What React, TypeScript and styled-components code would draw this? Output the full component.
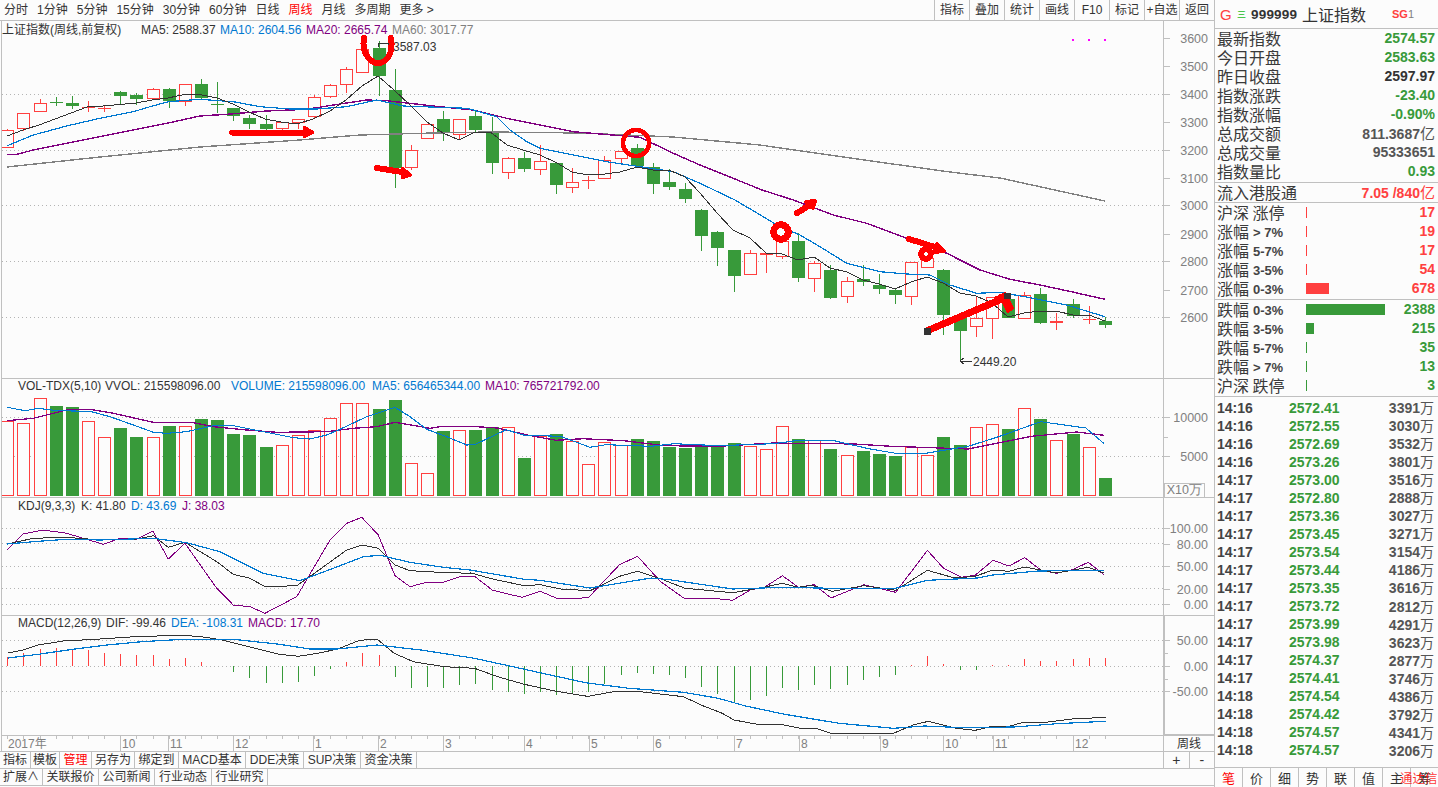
import React from "react";
import styled, { createGlobalStyle } from "styled-components";

const RED = "#ff4040";
const GREEN = "#389a3a";
const BLUE = "#0078d0";
const PURPLE = "#800080";
const DARK = "#333333";
const GRAY = "#808080";
const LINE = "#c0c0c0";
const SANS = `"Liberation Sans", Arial, sans-serif`;
const CJK = `"Liberation Sans", "Noto Sans CJK SC", sans-serif`;

const Global = createGlobalStyle`
  html, body { margin: 0; padding: 0; background: #fcfcfc; overflow: hidden; }
  #root { width: 1438px; height: 787px; }
  * { box-sizing: border-box; }
`;

const Page = styled.div`
  position: relative;
  display: flex;
  width: 1438px;
  height: 787px;
  background: #fcfcfc;
  color: ${DARK};
  font: 12px/1 ${CJK};
  overflow: hidden;
  white-space: nowrap;
`;
const LeftCol = styled.div`
  display: flex;
  flex-direction: column;
  width: 1214px;
  flex: none;
`;
const RightCol = styled.div`
  display: flex;
  flex-direction: column;
  width: 224px;
  flex: none;
  border-left: 1px solid ${LINE};
`;
const TopBar = styled.div`
  display: flex;
  justify-content: space-between;
  height: 21px;
  flex: none;
  border-bottom: 1px solid ${LINE};
`;
const Periods = styled.div`
  display: flex;
  align-items: center;
  gap: 9px;
  padding-left: 4px;
`;
const Period = styled.span<{ $on?: boolean }>`
  color: ${(p) => (p.$on ? "#ff0000" : DARK)};
`;
const Tools = styled.div`
  display: flex;
`;
const ToolBtn = styled.div`
  width: 35px;
  display: flex;
  align-items: center;
  justify-content: center;
  border-left: 1px solid ${LINE};
`;
const Panel = styled.div<{ $h: number }>`
  display: flex;
  height: ${(p) => p.$h}px;
  flex: none;
  margin-left: 1px;
  border-left: 1px solid ${LINE};
  border-bottom: 1px solid ${LINE};
`;
const Plot = styled.svg`
  display: block;
  width: 1161px;
  height: 100%;
  flex: none;
`;
const DatePlot = styled.svg`
  display: block;
  width: 1163px;
  height: 100%;
  flex: none;
`;
const Axis = styled.svg<{ $heavy?: boolean }>`
  display: block;
  width: 51px;
  height: 100%;
  flex: none;
  border-left: 1px solid ${LINE};
  ${(p) => (p.$heavy ? `box-shadow: inset 1px 0 0 ${LINE}, inset 0 -1px 0 ${LINE};` : "")}
`;
const Legend = styled.text<{ $c?: string }>`
  font: 12px ${CJK};
  fill: ${(p) => p.$c || DARK};
`;
const AxisText = styled.text`
  font: 12.5px ${SANS};
  fill: ${GRAY};
  text-anchor: end;
`;
const Row = styled.div<{ $h: number }>`
  display: flex;
  height: ${(p) => p.$h}px;
  flex: none;
  border-bottom: 1px solid ${LINE};
`;
const DateCell = styled.div`
  width: 51px;
  flex: none;
  display: flex;
  align-items: center;
  justify-content: center;
  border-left: 1px solid ${LINE};
`;
const PlusMinus = styled.div`
  width: 51px;
  flex: none;
  display: flex;
  border-left: 1px solid ${LINE};
`;
const PlusMinusBtn = styled.div`
  flex: 1;
  display: flex;
  align-items: center;
  justify-content: center;
  font-size: 14px;
  & + & { border-left: 1px solid ${LINE}; }
`;
const Tabs = styled.div`
  flex: 1;
  display: flex;
`;
const Tab = styled.div<{ $w: number; $on?: boolean }>`
  width: ${(p) => p.$w}px;
  flex: none;
  display: flex;
  align-items: center;
  justify-content: center;
  border-right: 1px solid ${LINE};
  color: ${(p) => (p.$on ? "#ff0000" : DARK)};
`;
const Header = styled.div`
  height: 29px;
  flex: none;
  display: flex;
  align-items: center;
  border-bottom: 1px solid ${LINE};
  padding-left: 5px;
`;
const HeadG = styled.span`
  width: 17px;
  font: 15px ${SANS};
  color: ${RED};
`;
const HeadSan = styled.span`
  width: 14px;
  font: 9px "Noto Sans CJK SC", sans-serif;
  color: #22bb22;
`;
const HeadCode = styled.span`
  font: bold 13.5px ${SANS};
  width: 51px;
  letter-spacing: 0.2px;
`;
const HeadName = styled.span`
  font: 16px "Noto Sans CJK SC", sans-serif;
  width: 90px;
`;
const HeadSg = styled.span`
  font: bold 11px ${SANS};
  color: ${RED};
`;
const HeadOne = styled.span`
  font: 11px ${SANS};
  color: ${GRAY};
`;
const Block = styled.div<{ $h: number }>`
  height: ${(p) => p.$h}px;
  flex: none;
  border-bottom: 1px solid ${LINE};
`;
const Info = styled.div`
  height: 19px;
  display: flex;
  align-items: center;
  justify-content: space-between;
  padding: 0 3px 0 2px;
`;
const Label = styled.span`
  font: 16px/19px "Noto Sans CJK SC", sans-serif;
  color: #3a3a3a;
`;
const Value = styled.span<{ $c?: string }>`
  font: bold 14px/19px ${SANS};
  color: ${(p) => p.$c || "#555"};
`;
const Unit = styled.span`
  font: 15px/19px "Noto Sans CJK SC", sans-serif;
`;
const Dist = styled.div`
  height: 19px;
  display: grid;
  grid-template-columns: 89px 1fr auto;
  align-items: center;
  padding: 0 3px 0 2px;
`;
const Suffix = styled.span`
  font: bold 13px ${SANS};
  color: #444;
  margin-left: 4px;
  vertical-align: 1px;
`;
const Bar = styled.div<{ $w: number; $c: string }>`
  width: ${(p) => p.$w}px;
  height: 11px;
  background: ${(p) => p.$c};
`;
const TickList = styled.div`
  height: 371px;
  flex: none;
  padding-top: 1px;
  border-bottom: 1px solid ${LINE};
`;
const Tick = styled.div`
  height: 18.05px;
  display: grid;
  grid-template-columns: 72px 1fr auto;
  align-items: center;
  padding: 0 4px 0 2px;
  font: bold 14px/18px ${SANS};
`;
const TickTime = styled.span`
  color: #444;
`;
const TickPrice = styled.span`
  color: ${GREEN};
`;
const TickVol = styled.span`
  color: #555;
`;
const TickUnit = styled.span`
  font: 14px/18px "Noto Sans CJK SC", sans-serif;
`;
const SideTabs = styled.div`
  flex: 1;
  display: flex;
`;
const SideTab = styled.div<{ $on?: boolean }>`
  flex: 1;
  display: flex;
  align-items: center;
  justify-content: center;
  font: 13px "Noto Sans CJK SC", sans-serif;
  color: ${(p) => (p.$on ? "#ff0000" : DARK)};
  & + & { border-left: 1px solid ${LINE}; }
`;
const Stamp = styled.div`
  position: absolute;
  left: 1400px;
  top: 771px;
  font: 12.5px "Noto Sans CJK SC", sans-serif;
  color: rgba(255, 0, 0, 0.82);
  line-height: 14px;
`;

type P = number[];
const z = (sx: number, ox: number, oy: number, raw: P[]): P[] =>
  raw.map(([x, y]) => [ox + x / sx, oy + y / 3]);
const pts = (a: P[]) => a.map((p) => `${p[0].toFixed(1)},${p[1].toFixed(1)}`).join(" ");
const X = (i: number) => Math.round(7.3 + 16.14 * i);

// high, body top, body bottom, low, 1 = up (red)
const candles: number[][] = [
  [129,130,148,148,1],[113,113,129,131,1],[99,103,112,112,1],[97,102,103,106,0],[96,103,106,109,0],
  [101,107,108,112,1],[105,108,109,112,1],[91,92,96,104,0],[93,95,99,105,0],[88,89,99,99,1],
  [88,89,101,108,0],[84,84,102,106,1],[79,84,98,100,0],[82,104,105,113,0],[108,108,116,121,0],
  [115,118,124,129,0],[115,124,129,130,0],[122,122,129,130,1],[119,119,123,129,1],[95,97,117,118,1],
  [84,85,97,98,1],[67,69,85,93,1],[48,49,73,73,1],[41,48,76,96,0],[69,90,168,188,0],
  [145,150,168,170,1],[124,124,139,139,1],[111,119,133,141,0],[119,119,135,139,1],[110,116,130,133,0],
  [117,132,163,174,0],[157,158,173,179,1],[152,158,169,172,0],[145,161,170,175,1],[163,163,185,194,0],
  [168,182,188,193,1],[176,180,181,189,1],[156,160,179,179,1],[151,151,159,164,1],[144,148,166,166,0],
  [163,167,184,194,0],[169,182,187,190,0],[183,189,199,203,0],[209,210,236,251,0],[231,232,248,266,0],
  [250,250,276,292,0],[250,253,275,275,1],[253,253,255,273,1],[241,241,257,259,1],[233,241,278,282,0],
  [261,263,279,292,1],[265,270,298,299,0],[277,281,297,303,1],[265,279,282,286,0],[274,285,289,294,0],
  [289,290,295,304,0],[262,262,297,305,1],[255,258,268,268,1],[269,270,315,335,0],[316,316,331,361,0],
  [297,318,327,337,1],[297,297,319,339,1],[296,299,318,318,0],[292,295,319,319,1],[288,294,323,324,0],
  [313,321,323,330,1],[299,304,316,318,0],[306,319,320,324,1],[317,321,325,328,0],
];

const vols: P[] = [
  [421,1],[423,1],[398,1],[406,0],[407,0],[421,1],[437,1],[428,0],[437,0],[437,1],[426,0],[426,1],[419,0],[420,0],
  [434,0],[435,0],[447,0],[445,1],[435,1],[430,1],[418,1],[403,1],[403,1],[409,0],[400,0],[463,1],[473,1],[431,0],
  [430,1],[430,0],[427,0],[427,1],[458,0],[436,1],[434,0],[441,1],[464,1],[442,1],[445,1],[439,0],[441,0],[447,0],
  [448,0],[445,0],[445,0],[443,0],[446,1],[449,1],[426,1],[439,0],[440,1],[449,0],[455,1],[451,0],[454,0],[456,0],
  [447,1],[455,1],[437,0],[445,0],[427,1],[424,1],[429,0],[408,1],[419,0],[440,1],[434,0],[447,1],[478,0],
];

const macd: number[] = [
  657,653,649,648,649,650,653,654,655,655,659,658,662,666,672,678,683,683,682,676,669,662,653,655,677,688,687,688,685,684,
  690,692,694,692,695,694,692,684,675,673,674,675,678,687,694,702,700,696,688,690,685,689,685,680,677,675,665,656,664,670,
  670,665,665,659,661,661,659,658,658,
];

const ma5: P[] = [
  [7,136],[23,130],[39,125],[55,119],[71,113],[87,107],[103,106],[120,104.5],[136,103],[152,100],[168,98],[184,94.5],[200,94.5],
  [217,98],[233,104],[249,112],[265,119],[281,122],[297,124],[313,119],[330,111],[346,100],[362,86],[378,76],[394,90],[410,105],
  [427,122],[443,133],[459,140],[475,132],[491,132.6],[507,145],[523,150],[540,155],[557,163],[572,172],[588,175],[605,174],[620,172],
  [637,167],[653,170],[669,170],[685,177],[700,193],[717,213],[733,230],[750,238],[766,253],[782,254],[798,260],[814,257],[830,268],
  [847,272],[863,280],[879,284],[895,289],[911,282],[927,277],[943,283],[960,293],[976,296],[992,303],[1008,317],[1024,313],[1040,311],
  [1056,311],[1073,315],[1089,315],[1105,321],
];
const ma10: P[] = [
  ...z(3,0,0,[[22,437],[100,405],[200,378],[300,355],[400,335],[450,320],[505,305],[600,298],[700,305],[780,320],[870,327],[950,327],[1040,320],[1130,300],[1210,318],[1400,325]]),
  ...z(3,340,20,[[400,270],[470,290],[510,330],[560,365],[600,385],[700,405],[800,425],[900,440],[1000,455],[1080,490]]),
  ...z(3,700,200,[[105,0],[240,80],[300,105],[360,140],[440,190],[540,215],[620,222],[690,225],[750,255],[830,280],[900,277],[1000,295],[1100,315],[1215,350]]),
];
const ma20: P[] = [
  ...z(3,0,0,[[22,463],[50,463],[100,450],[200,430],[300,410],[400,390],[500,370],[600,348],[680,343],[800,333],[920,328],[1000,315],[1100,300],[1160,302],[1300,318]]),
  ...z(3,340,20,[[400,270],[500,295],[700,335],[900,352],[1000,400],[1080,435]]),
  [730,177],
  [762,190],
  ...z(3,700,200,[[280,0],[400,45],[500,70],[620,115],[740,160],[840,210],[930,238],[1020,255],[1100,272],[1215,298]]),
];
const ma60: P[] = [[7,167],[100,157],[200,147],[300,140],[360,135],[433,133],[490,132],[580,133],[673,137],[760,145],[850,158],[950,172],[1000,178],[1105,201]];

const volBlue: P[] = [
  ...z(3,0,370,[[22,112],[75,122],[115,115],[170,122],[270,124],[330,140],[400,165],[460,187],[500,190],[560,185],[640,167],[700,167],[790,185],[880,203],[930,207],[980,195],[1020,178],[1100,140],[1185,112],[1230,140],[1280,178],[1340,200],[1400,225]]),
  ...z(2.208,470,378,[[10,200],[80,155],[120,172],[200,175],[265,208],[300,200],[400,205],[450,197],[550,203],[670,197],[720,188],[800,187],[880,212],[940,226],[1000,227],[1100,205],[1170,175],[1260,131],[1360,150],[1400,197]]),
];
const volPurple: P[] = [
  ...z(3,0,370,[[22,152],[100,145],[200,120],[270,118],[340,130],[460,157],[580,158],[640,170],[740,180],[830,187],[980,185],[1060,175],[1130,170],[1185,157],[1290,175],[1320,170],[1400,170]]),
  ...z(2.208,470,378,[[0,145],[60,150],[130,172],[190,187],[250,182],[340,188],[430,203],[550,205],[670,195],[850,198],[930,205],[1100,213],[1240,175],[1340,162],[1400,172]]),
];
const kdjK: P[] = [
  ...z(3,0,370,[[22,522],[100,505],[200,502],[300,510],[360,508],[410,507],[460,497],[505,532],[555,517],[650,575],[700,613],[750,625],[795,650],[890,647],[950,605],[1040,540],[1085,525],[1135,535],[1185,585],[1230,602],[1320,607],[1410,610]]),
  ...z(2.208,470,498,[[0,224],[50,243],[120,263],[155,260],[200,273],[265,278],[330,235],[370,220],[420,242],[475,271],[580,284],[640,270],[690,256],[725,268],[755,262],[800,280],[870,263],[940,277],[1010,217],[1070,240],[1115,235],[1155,216],[1190,220],[1225,207],[1295,225],[1365,208],[1400,225]]),
];
const kdjD: P[] = [
  ...z(3,0,370,[[22,522],[100,515],[200,508],[300,510],[460,505],[560,518],[660,545],[790,610],[900,632],[1000,595],[1090,560],[1140,556],[1230,577],[1330,592],[1410,600]]),
  ...z(2.208,470,498,[[0,216],[120,244],[155,247],[265,270],[400,240],[440,245],[580,273],[690,268],[800,271],[940,271],[1010,247],[1120,240],[1155,231],[1255,219],[1400,217]]),
];
const kdjJ: P[] = [
  ...z(3,0,370,[[22,540],[70,492],[130,480],[200,490],[310,523],[360,505],[410,508],[458,483],[505,567],[555,520],[650,655],[700,705],[750,710],[795,730],[890,680],[990,510],[1040,460],[1085,442],[1135,495],[1185,617],[1230,650],[1280,637],[1330,637],[1380,620],[1410,620]]),
  ...z(2.208,470,498,[[0,235],[10,235],[50,277],[115,298],[155,280],[190,300],[225,303],[262,298],[330,200],[370,175],[420,250],[475,303],[545,302],[580,307],[620,275],[650,268],[690,233],[725,268],[760,260],[797,300],[870,260],[940,283],[1010,157],[1045,210],[1085,238],[1115,232],[1155,187],[1190,204],[1225,179],[1260,216],[1295,226],[1330,215],[1365,193],[1400,230]]),
];
const dif: P[] = [
  ...z(2.613,0,615,[[20,114],[60,105],[100,90],[165,78],[250,73],[340,66],[460,61],[520,64],[580,75],[650,95],[730,118],[780,124],[830,115],[880,103],[940,76],[985,72],[1030,115],[1080,140],[1160,155],[1240,160],[1300,185],[1370,208],[1450,228],[1530,243]]),
  ...z(2.57,590,615,[[0,243],[60,230],[130,230],[240,245],[290,272],[340,295],[370,315],[440,330],[490,328],[540,340],[580,340],[620,355],[780,355],[830,330],[870,319],[940,340],[990,346],[1030,335],[1080,333],[1110,323],[1170,322],[1240,312],[1325,307]]),
];
const dea: P[] = [
  ...z(2.613,0,615,[[20,129],[100,118],[190,103],[280,90],[370,80],[460,74],[620,74],[730,88],[810,102],[880,102],[985,90],[1100,105],[1240,130],[1340,155],[1450,183],[1530,203]]),
  ...z(2.57,590,615,[[0,205],[100,220],[240,232],[330,250],[400,273],[500,298],[640,325],[780,340],[860,333],[960,338],[1090,336],[1200,326],[1325,319]]),
];

const Grid = ({ ys }: { ys: number[] }) => (
  <g stroke="#b4b4b4" strokeDasharray="1 3">
    {ys.map((y) => (
      <line key={y} x1={2} x2={1163} y1={y + 0.5} y2={y + 0.5} />
    ))}
  </g>
);
const Ln = ({ p, c, w = 1 }: { p: P[]; c: string; w?: number }) => (
  <polyline points={pts(p)} fill="none" stroke={c} strokeWidth={w} />
);
const AxisMarks = ({ items, minor = [] }: { items: [string, number][]; minor?: number[] }) => (
  <>
    {items.map(([t, y]) => (
      <g key={t}>
        <line x1={1164} x2={1170} y1={y + 0.5} y2={y + 0.5} stroke={LINE} />
        <AxisText x={1208} y={y + 4.5}>{t}</AxisText>
      </g>
    ))}
    {minor.map((y) => (
      <line key={y} x1={1164} x2={1168} y1={y + 0.5} y2={y + 0.5} stroke={LINE} />
    ))}
  </>
);

const Candle = ({ d, i }: { d: number[]; i: number }) => {
  const [h, t, b, l, up] = d;
  const x = X(i);
  const c = up ? RED : GREEN;
  const thin = b - t < 4;
  return (
    <g>
      <rect x={x} y={h} width={1} height={Math.max(0, t - h)} fill={c} />
      <rect x={x} y={b} width={1} height={Math.max(0, l - b)} fill={c} />
      {up && !thin ? (
        <rect x={x - 5.5} y={t + 0.5} width={12} height={b - t - 1} fill="#fcfcfc" stroke={c} />
      ) : (
        <rect x={x - 6} y={t} width={13} height={b - t} fill={c} />
      )}
    </g>
  );
};

const Marks = () => (
  <g fill="none" stroke="#ff0000" strokeLinecap="round" strokeLinejoin="round">
    <path d="M364 38 C361 55 372 63 378 63 C385 63 394 55 391 38" strokeWidth={6} />
    <path d="M232 132.5 H306" strokeWidth={6} />
    <path d="M304 127 L313 132.5 L304 137 Z" strokeWidth={3} fill="#ff0000" />
    <path d="M377 168 L402 172" strokeWidth={6} />
    <path d="M402 168 L411 175 L402 178 Z" strokeWidth={3} fill="#ff0000" />
    <circle cx={636} cy={143} r={13} strokeWidth={4.6} />
    <circle cx={781} cy={232} r={7.2} strokeWidth={7} />
    <path d="M797 213 L810 205" strokeWidth={6} />
    <path d="M806 202 L815 201 L813 208 Z" strokeWidth={4} fill="#ff0000" />
    <path d="M909 239 L938 248" strokeWidth={6} />
    <path d="M937 244 L944 251 L934 252 Z" strokeWidth={4} fill="#ff0000" />
    <circle cx={926} cy={254} r={4.8} strokeWidth={6} />
    <path d="M929 330 L1002 299" strokeWidth={7} />
    <path d="M1000 296 L1005 294 L1012 308 L1008 311 Z" strokeWidth={3.5} fill="#ff0000" />
    <path d="M996 298 L1006 296" strokeWidth={4} />
  </g>
);

const MainPanel = () => (
  <Panel $h={358}>
    <Plot viewBox="2 21 1161 357" shapeRendering="crispEdges">
      <Grid ys={[94, 150, 205, 261, 317]} />
      {candles.map((d, i) => (
        <Candle key={i} d={d} i={i} />
      ))}
      <Ln p={ma60} c={GRAY} w={1.4} />
      <Ln p={ma20} c={PURPLE} w={1.4} />
      <Ln p={ma10} c={BLUE} w={1.2} />
      <Ln p={ma5} c={DARK} />
      <Legend x={2} y={34}>上证指数(周线,前复权)</Legend>
      <Legend x={141} y={34}>MA5: 2588.37</Legend>
      <Legend x={220} y={34} $c={BLUE}>MA10: 2604.56</Legend>
      <Legend x={306} y={34} $c={PURPLE}>MA20: 2665.74</Legend>
      <Legend x={392} y={34} $c={GRAY}>MA60: 3017.77</Legend>
      <path d="M378 47 V43 H385 L392 45" fill="none" stroke={DARK} />
      <Legend x={393} y={51}>3587.03</Legend>
      <path d="M960 361 H972 M960 361 L964 358 M960 361 L964 364" fill="none" stroke={DARK} />
      <Legend x={973} y={366}>2449.20</Legend>
      <rect x={1072} y={39} width={2} height={2} fill="#ff00ff" />
      <rect x={1088} y={39} width={2} height={2} fill="#ff00ff" />
      <rect x={1104} y={39} width={2} height={2} fill="#ff00ff" />
      <Marks />
      <rect x={924} y={328} width={7} height={7} fill={DARK} />
      <rect x={1004} y={293} width={7} height={6} fill={DARK} />
    </Plot>
    <Axis viewBox="1164 21 50 357" shapeRendering="crispEdges">
      <AxisMarks
        items={[["3600",38],["3500",66],["3400",94],["3300",122],["3200",150],["3100",178],["3000",205],["2900",234],["2800",261],["2700",290],["2600",317]]}
      />
    </Axis>
  </Panel>
);

const VolPanel = () => (
  <Panel $h={119}>
    <Plot viewBox="2 379 1161 118" shapeRendering="crispEdges">
      <Grid ys={[417, 456]} />
      {vols.map(([top, up], i) =>
        up ? (
          <rect key={i} x={X(i) - 5.5} y={top + 0.5} width={12} height={495 - top} fill="#fcfcfc" stroke={RED} />
        ) : (
          <rect key={i} x={X(i) - 6} y={top} width={13} height={496 - top} fill={GREEN} />
        )
      )}
      <Ln p={volPurple} c={PURPLE} w={1.3} />
      <Ln p={volBlue} c={BLUE} w={1.1} />
      <Legend x={18} y={390}>VOL-TDX(5,10)</Legend>
      <Legend x={105} y={390}>VVOL: 215598096.00</Legend>
      <Legend x={231} y={390} $c={BLUE}>VOLUME: 215598096.00</Legend>
      <Legend x={372} y={390} $c={BLUE}>MA5: 656465344.00</Legend>
      <Legend x={485} y={390} $c={PURPLE}>MA10: 765721792.00</Legend>
    </Plot>
    <Axis viewBox="1164 379 50 118" shapeRendering="crispEdges">
      <AxisMarks items={[["10000",417],["5000",456]]} minor={[437]} />
      <rect x={1164.5} y={483.5} width={40} height={14} fill="none" stroke={LINE} />
      <AxisText x={1202} y={494}>X10万</AxisText>
    </Axis>
  </Panel>
);

const KdjPanel = () => (
  <Panel $h={118}>
    <Plot viewBox="2 498 1161 117" shapeRendering="crispEdges">
      <Grid ys={[528, 543, 566, 588, 604]} />
      <Ln p={kdjJ} c={PURPLE} />
      <Ln p={kdjK} c={DARK} />
      <Ln p={kdjD} c={BLUE} w={1.2} />
      <Legend x={18} y={510}>KDJ(9,3,3)</Legend>
      <Legend x={81} y={510}>K: 41.80</Legend>
      <Legend x={131} y={510} $c={BLUE}>D: 43.69</Legend>
      <Legend x={182} y={510} $c={PURPLE}>J: 38.03</Legend>
    </Plot>
    <Axis viewBox="1164 498 50 117" shapeRendering="crispEdges">
      <AxisMarks items={[["100.00",528],["80.00",544],["50.00",566],["20.00",589],["0.00",604]]} />
    </Axis>
  </Panel>
);

const MacdPanel = () => (
  <Panel $h={120}>
    <Plot viewBox="2 616 1161 119" shapeRendering="crispEdges">
      <Grid ys={[640, 666, 691]} />
      {macd.map((y, i) =>
        y === 666 ? null : (
          <rect key={i} x={X(i)} y={Math.min(y, 666)} width={1} height={Math.abs(y - 666)} fill={y < 666 ? RED : GREEN} />
        )
      )}
      <Ln p={dif} c={DARK} />
      <Ln p={dea} c={BLUE} w={1.2} />
      <Legend x={18} y={627}>MACD(12,26,9)</Legend>
      <Legend x={106} y={627}>DIF: -99.46</Legend>
      <Legend x={171} y={627} $c={BLUE}>DEA: -108.31</Legend>
      <Legend x={248} y={627} $c={PURPLE}>MACD: 17.70</Legend>
    </Plot>
    <Axis $heavy viewBox="1164 616 50 119" shapeRendering="crispEdges">
      <AxisMarks items={[["50.00",640],["0.00",666],["-50.00",691]]} minor={[653, 679]} />
    </Axis>
  </Panel>
);

const months: [string, number][] = [
  ["10",120],["11",168],["12",233],["1",313],["2",378],["3",443],["4",524],["5",589],["6",653],
  ["7",734],["8",799],["9",880],["10",943],["11",993],["12",1073],
];
const DateAxis = () => (
  <Row $h={16}>
    <DatePlot viewBox="0 736 1163 15" shapeRendering="crispEdges">
      <rect x={1} y={736} width={1} height={15} fill={LINE} />
      {candles.map((_, i) => (
        <rect key={i} x={X(i)} y={736} width={1} height={3} fill={LINE} />
      ))}
      <Legend x={8} y={748} $c={GRAY}>2017年</Legend>
      {months.map(([t, x]) => (
        <g key={x}>
          <rect x={x} y={736} width={1} height={15} fill={LINE} />
          <Legend x={x + 2} y={748} $c={GRAY}>{t}</Legend>
        </g>
      ))}
    </DatePlot>
    <DateCell>周线</DateCell>
  </Row>
);

const tabs1: [string, number, boolean?][] = [
  ["指标",31],["模板",29],["管理",32,true],["另存为",43],["绑定到",44],["MACD基本",67],["DDE决策",58],["SUP决策",57],["资金决策",56],
];
const tabs2: [string, number][] = [["扩展∧",43],["关联报价",56],["公司新闻",56],["行业动态",57],["行业研究",56]];

const quote: [string, string, string?, string?][] = [
  ["最新指数","2574.57",GREEN],["今日开盘","2583.63",GREEN],["昨日收盘","2597.97",DARK],["指数涨跌","-23.40",GREEN],
  ["指数涨幅","-0.90%",GREEN],["总成交额","811.3687",undefined,"亿"],["总成交量","95333651"],["指数量比","0.93",GREEN],
];
const ups: [string, string, number, string][] = [
  ["沪深","涨停",1,"17"],["涨幅","> 7%",1,"19"],["涨幅","5-7%",1,"17"],["涨幅","3-5%",1,"54"],["涨幅","0-3%",23,"678"],
];
const downs: [string, string, number, string][] = [
  ["跌幅","0-3%",79,"2388"],["跌幅","3-5%",8,"215"],["跌幅","5-7%",1,"35"],["跌幅","> 7%",1,"13"],["沪深","跌停",1,"3"],
];
const ticks: [string, string, string][] = [
  ["14:16","2572.41","3391"],["14:16","2572.55","3030"],["14:16","2572.69","3532"],["14:16","2573.26","3801"],
  ["14:17","2573.00","3516"],["14:17","2572.80","2888"],["14:17","2573.36","3027"],["14:17","2573.45","3271"],
  ["14:17","2573.54","3154"],["14:17","2573.44","4186"],["14:17","2573.35","3616"],["14:17","2573.72","2812"],
  ["14:17","2573.99","4291"],["14:17","2573.98","3623"],["14:17","2574.37","2877"],["14:17","2574.41","3746"],
  ["14:18","2574.54","4386"],["14:18","2574.42","3792"],["14:18","2574.57","4341"],["14:18","2574.57","3206"],
];

const DistRows = ({ rows, c }: { rows: [string, string, number, string][]; c: string }) => (
  <>
    {rows.map(([a, b, w, v]) => (
      <Dist key={a + b}>
        <span>
          <Label>{a}</Label>
          {a === "沪深" ? <Label> {b}</Label> : <Suffix>{b}</Suffix>}
        </span>
        <Bar $w={w} $c={c} />
        <Value $c={c}>{v}</Value>
      </Dist>
    ))}
  </>
);

export default function App() {
  return (
    <Page>
      <Global />
      <LeftCol>
        <TopBar>
          <Periods>
            {["分时","1分钟","5分钟","15分钟","30分钟","60分钟","日线"].map((t) => (
              <Period key={t}>{t}</Period>
            ))}
            <Period $on>周线</Period>
            <Period>月线</Period>
            <Period>多周期</Period>
            <Period>更多 &gt;</Period>
          </Periods>
          <Tools>
            {["指标","叠加","统计","画线","F10","标记","+自选","返回"].map((t) => (
              <ToolBtn key={t}>{t}</ToolBtn>
            ))}
          </Tools>
        </TopBar>
        <MainPanel />
        <VolPanel />
        <KdjPanel />
        <MacdPanel />
        <DateAxis />
        <Row $h={17}>
          <Tabs>
            {tabs1.map(([t, w, on]) => (
              <Tab key={t} $w={w} $on={on}>{t}</Tab>
            ))}
          </Tabs>
          <PlusMinus>
            <PlusMinusBtn>+</PlusMinusBtn>
            <PlusMinusBtn>-</PlusMinusBtn>
          </PlusMinus>
        </Row>
        <Row $h={17}>
          <Tabs>
            {tabs2.map(([t, w]) => (
              <Tab key={t} $w={w}>{t}</Tab>
            ))}
          </Tabs>
        </Row>
      </LeftCol>
      <RightCol>
        <Header>
          <HeadG>G</HeadG>
          <HeadSan>三</HeadSan>
          <HeadCode>999999</HeadCode>
          <HeadName>上证指数</HeadName>
          <HeadSg>SG</HeadSg>
          <HeadOne>1</HeadOne>
        </Header>
        <Block $h={154}>
          {quote.map(([l, v, c, u]) => (
            <Info key={l}>
              <Label>{l}</Label>
              <Value $c={c}>
                {v}
                {u && <Unit>{u}</Unit>}
              </Value>
            </Info>
          ))}
        </Block>
        <Block $h={20}>
          <Info>
            <Label>流入港股通</Label>
            <Value $c={RED}>
              7.05 /840<Unit>亿</Unit>
            </Value>
          </Info>
        </Block>
        <Block $h={97}>
          <DistRows rows={ups} c={RED} />
        </Block>
        <Block $h={97}>
          <DistRows rows={downs} c={GREEN} />
        </Block>
        <TickList>
          {ticks.map(([t, p, v], i) => (
            <Tick key={i}>
              <TickTime>{t}</TickTime>
              <TickPrice>{p}</TickPrice>
              <TickVol>
                {v}
                <TickUnit>万</TickUnit>
              </TickVol>
            </Tick>
          ))}
        </TickList>
        <SideTabs>
          <SideTab $on>笔</SideTab>
          {["价","细","势","联","值","主","筹"].map((t) => (
            <SideTab key={t}>{t}</SideTab>
          ))}
        </SideTabs>
      </RightCol>
      <Stamp>通达信</Stamp>
    </Page>
  );
}
